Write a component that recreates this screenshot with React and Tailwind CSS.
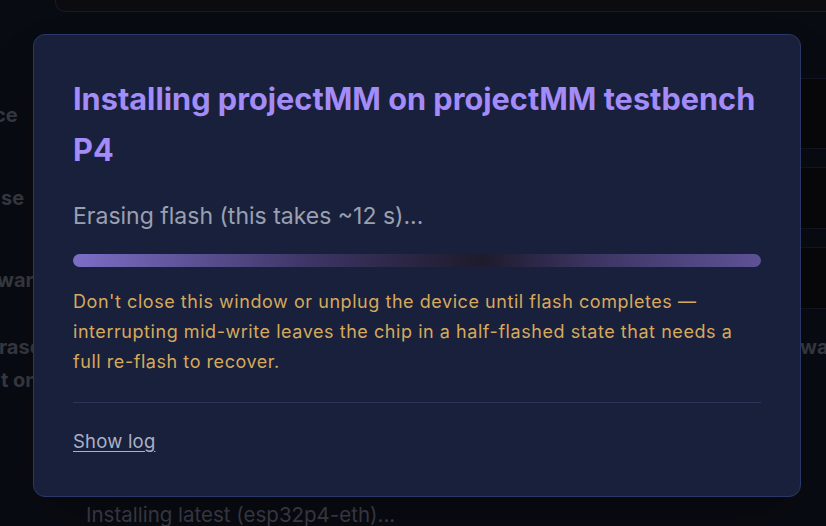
export default function App() {
  return (
    <div className="relative w-[826px] h-[526px] overflow-hidden bg-[#090b12] font-['Inter','Noto_Sans',sans-serif]">
      {/* page behind the dialog */}
      <div className="flex flex-col h-full">
        <div className="ml-[55px] h-[12px] shrink-0 rounded-bl-[10px] border-b border-l border-[#161a2b] bg-[#0b0b10]" />
        <div className="flex flex-1">
          <div className="w-[120px] shrink-0 flex flex-col text-[20px] font-bold leading-[24px] text-[#35383f] pt-[91px] whitespace-nowrap">
            <p className="-ml-[6px]">ce</p>
            <p className="mt-[59px] ml-[1px]">se</p>
            <p className="mt-[58px] -ml-[3px]">ware</p>
            <p className="mt-[43px] -ml-[1px]">rase</p>
            <p className="mt-[9px] ml-[1px]">t on</p>
          </div>
          <div className="flex-1 flex flex-col items-end pt-[66px]">
            <div className="w-[200px] h-[71px] border-y border-[#121523] bg-[#08080b]" />
            <div className="w-[200px] h-[62px] mt-[18px] border-y border-[#121523] bg-[#08080b]" />
            <div className="w-[200px] h-[62px] mt-[18px] border-y border-[#121523] bg-[#08080b]" />
            <p className="mt-[26px] w-[26px] overflow-hidden text-[20px] font-bold leading-[24px] text-[#35383f]">wa</p>
          </div>
        </div>
        <p className="pl-[86px] text-[20.5px] leading-[22px] text-[#3a3d46]">Installing latest (esp32p4-eth)...</p>
      </div>

      {/* dialog */}
      <div className="absolute left-[33px] top-[34px] w-[768px] h-[463px] rounded-[12px] border border-[#2b3766] bg-[#19203b] px-[39px] pt-[38px] shadow-2xl">
        <h2 className="text-[30.7px] font-bold leading-[51px] text-[#a38bf8]">
          <span className="whitespace-nowrap">Installing projectMM on projectMM testbench</span> P4
        </h2>
        <p className="mt-[26px] text-[23px] leading-[30px] text-[#9aa0b2]">Erasing flash (this takes ~12 s)...</p>
        <div className="mt-[23px] h-[13px] rounded-full bg-[linear-gradient(90deg,#7c6ec6_0%,#3c3463_35%,#1d1b2c_59.5%,#3b3461_75%,#5e5296_100%)]" />
        <p className="mt-[20px] text-[18px] leading-[30px] tracking-[0.55px] text-[#d6a95d]">
          Don't close this window or unplug the device until flash completes — interrupting mid-write leaves the chip in a half-flashed state that needs a full re-flash to recover.
        </p>
        <div className="mt-[25px] border-t border-[#2c3659]" />
        <button className="mt-[25px] text-[18.5px] leading-[26px] tracking-[0.2px] text-[#aab0c6] underline underline-offset-[3px]">Show log</button>
      </div>
    </div>
  );
}
